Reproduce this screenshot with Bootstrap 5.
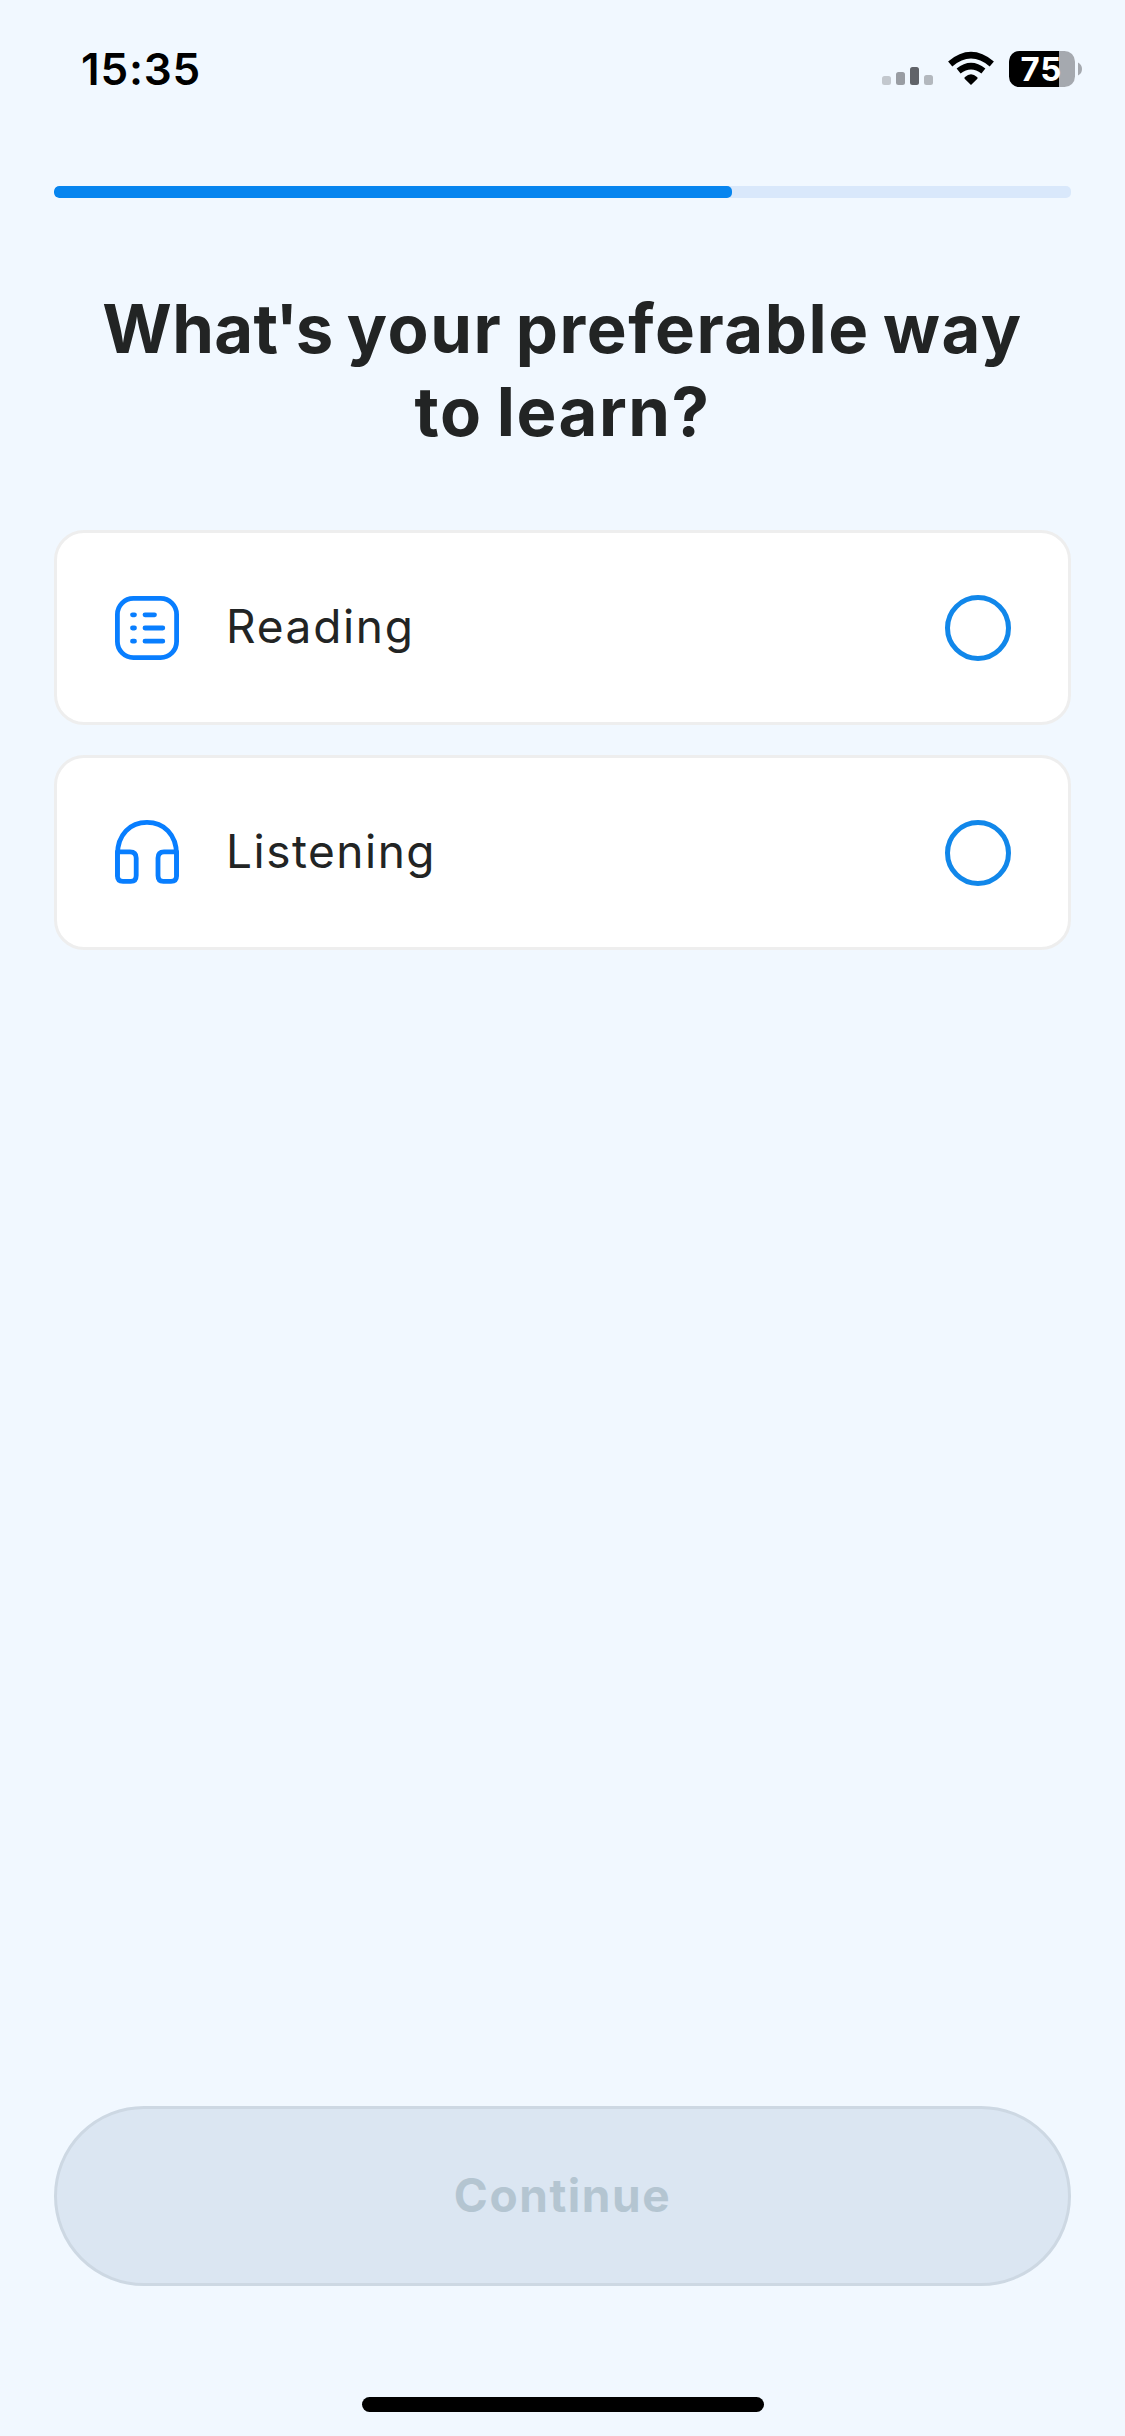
<!DOCTYPE html>
<html lang="en">
<head>
<meta charset="utf-8">
<meta name="viewport" content="width=device-width, initial-scale=1">
<title>What's your preferable way to learn?</title>
<link href="https://cdn.jsdelivr.net/npm/bootstrap@5.3.0/dist/css/bootstrap.min.css" rel="stylesheet">
<style>
  body { background: #f1f8ff; color: #222424; font-family: Inter, "Liberation Sans", sans-serif; }
  .screen { width: 1125px; height: 2436px; overflow: hidden; }
  .status { height: 138px; padding: 0 43px 0 81px; color: #000; }
  .clock { font-size: 44px; line-height: 54px; font-weight: 600; letter-spacing: .8px; }
  .content { padding: 48px 54px 0; }
  .steps { height: 12px; border-radius: 5px; background: #d9e8fb; }
  .steps .progress-bar { border-radius: 5px; background: #0785ef; }
  .question { margin: 89px 0 77px; font-size: 67px; line-height: 83px; font-weight: 700; letter-spacing: 1.55px; word-spacing: -4px; }
  .question .tight { letter-spacing: -2.5px; }
  .question .first-word { letter-spacing: .3px; }
  .question .last-line { letter-spacing: 1.5px; word-spacing: -3px; }
  .options { gap: 30px; }
  .option { height: 195px; padding: 0 57px 0 58px; border: 3px solid #eee; border-radius: 30px; background: #fff; color: #222424; font-size: 46px; line-height: 56px; letter-spacing: 1.7px; }
  .option span { padding-bottom: 4px; }
  .option svg { width: 64px; height: 64px; margin-right: 47px; fill: none; stroke: #087eff; stroke-width: 4.8; stroke-linecap: round; stroke-linejoin: round; }
  .option + .option { letter-spacing: 1.5px; }
  .option + .option svg { margin-bottom: 1px; }
  .option .form-check-input { width: 66px; height: 66px; border: 5px solid #1187ea; background-color: #fff; opacity: 1; }
  .continue { height: 180px; margin: 0 54px; padding-bottom: 8px; border: 3px solid #cdd8e3; font-size: 46px; font-weight: 700; letter-spacing: 1.55px; }
  .continue:disabled { border-color: #cdd8e3; background: #dbe6f2; color: #b4c5d1; opacity: 1; }
  .home { width: 402px; height: 15px; margin: 111px auto 24px; background: #000; }
</style>
</head>
<body>
<div class="screen d-flex flex-column">
  <header class="status d-flex align-items-center justify-content-between">
    <div class="clock">15:35</div>
    <svg width="201" height="38" viewBox="881 50 201 38" aria-hidden="true">
      <rect x="882" y="76" width="9" height="9" rx="2.5" fill="#c3c8ce"/>
      <rect x="896" y="72" width="9" height="13" rx="2.5" fill="#999da3"/>
      <rect x="910" y="67" width="9" height="18" rx="2.5" fill="#606369"/>
      <rect x="924" y="75" width="9" height="10" rx="2.5" fill="#b3b8be"/>
      <path d="M971 85L964.6 78.7Q964 77.8 965 77Q971 71.3 977 77Q978 77.8 977.4 78.7Z"/>
      <path d="M958.6 71Q971 61.4 983.4 71" fill="none" stroke="#000" stroke-width="6.5"/>
      <path d="M950.2 64Q971 46.4 991.8 64" fill="none" stroke="#000" stroke-width="6.5"/>
      <clipPath id="shell"><rect x="1009" y="51" width="66" height="36" rx="10.5"/></clipPath>
      <g clip-path="url(#shell)">
        <rect x="1009" y="51" width="66" height="36" fill="#a5a9af"/>
        <rect x="1009" y="51" width="50" height="36" fill="#000"/>
      </g>
      <path d="M1078 62.5Q1082 64.5 1082 69T1078 75.5Z" fill="#a5a9af"/>
      <text x="1020.5" y="81" font-size="33" font-weight="700" letter-spacing="1" fill="#fff">75</text>
    </svg>
  </header>

  <main class="content flex-grow-1">
    <div class="progress steps" role="progressbar" aria-valuenow="67" aria-valuemin="0" aria-valuemax="100">
      <div class="progress-bar" style="width: 66.67%"></div>
    </div>
    <h1 class="question text-center"><span class="first-word">Wha<span class="tight">t'</span>s</span> your preferable way<br><span class="last-line">to learn?</span></h1>
    <div class="options d-flex flex-column">
      <label class="option d-flex align-items-center">
        <svg viewBox="0 0 64 64" aria-hidden="true">
          <rect x="2.4" y="2.4" width="59.2" height="59.2" rx="16"/>
          <path d="M17.5 18.8h2M30 18.8h9.5M17.5 32h2M30 32h17.8M17.5 45.2h2M30 45.2h17.8"/>
        </svg>
        <span class="flex-grow-1">Reading</span>
        <input class="form-check-input m-0" type="radio" name="way">
      </label>
      <label class="option d-flex align-items-center">
        <svg viewBox="0 0 64 64" aria-hidden="true">
          <path d="M2.4 55V35C2.4 14 15.5 2.4 32 2.4S61.6 14 61.6 35V55"/>
          <path d="M2.4 31.8H15Q21.2 31.8 21.2 38V55.5Q21.2 61.4 15.8 61.4H8Q2.4 61.4 2.4 55.5ZM61.6 31.8H49Q43 31.8 43 38V55.5Q43 61.4 48.4 61.4H56Q61.6 61.4 61.6 55.5Z"/>
        </svg>
        <span class="flex-grow-1">Listening</span>
        <input class="form-check-input m-0" type="radio" name="way">
      </label>
    </div>
  </main>

  <button class="btn continue rounded-pill" type="button" disabled>Continue</button>
  <div class="home rounded-pill flex-shrink-0"></div>
</div>
<script src="https://cdn.jsdelivr.net/npm/bootstrap@5.3.0/dist/js/bootstrap.bundle.min.js"></script>
</body>
</html>
